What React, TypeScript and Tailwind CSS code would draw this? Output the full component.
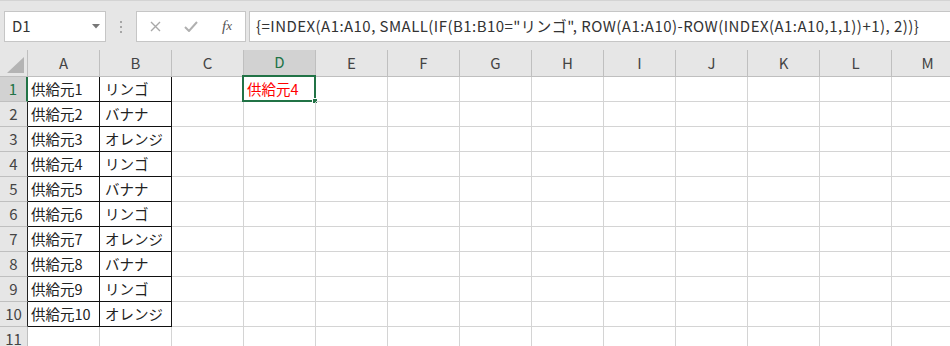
import React from "react";

const COLS = ["A", "B", "C", "D", "E", "F", "G", "H", "I", "J", "K", "L", "M"];
const FRUITS = ["リンゴ", "バナナ", "オレンジ", "リンゴ", "バナナ", "リンゴ", "オレンジ", "バナナ", "リンゴ", "オレンジ"];
const FORMULA = '{=INDEX(A1:A10, SMALL(IF(B1:B10="リンゴ", ROW(A1:A10)-ROW(INDEX(A1:A10,1,1))+1), 2))}';

export default function App() {
  return (
    <div className="h-[346px] w-[950px] overflow-hidden bg-white font-['Noto_Sans_CJK_JP','Noto_Sans',sans-serif] text-[#222]">
      <FormulaBar />
      <Sheet />
    </div>
  );
}

function FormulaBar() {
  return (
    <div className="flex h-[50px] items-start border-t border-[#d4d4d4] bg-[#e6e6e6] pt-[10px]">
      {/* name box */}
      <div className="ml-[4px] flex h-[31px] w-[102px] items-center justify-between border border-[#c6c6c6] bg-white pl-[7px] pr-[5px]">
        <span className="text-[15px] text-[#333]">D1</span>
        <svg width="8" height="5" viewBox="0 0 8 5">
          <polygon points="0,0 8,0 4,4.5" fill="#777" />
        </svg>
      </div>
      <div className="flex h-[31px] w-[30px] flex-col items-center justify-center gap-[3px]">
        <span className="h-[2px] w-[2px] bg-[#a6a6a6]" />
        <span className="h-[2px] w-[2px] bg-[#a6a6a6]" />
        <span className="h-[2px] w-[2px] bg-[#a6a6a6]" />
      </div>
      {/* cancel / enter / fx */}
      <div className="grid h-[31px] w-[110px] grid-cols-[36px_36px_36px] items-center border border-[#c6c6c6] bg-white">
        <div className="flex justify-center">
          <svg width="11" height="11" viewBox="0 0 11 11">
            <path d="M1 1 L10 10 M10 1 L1 10" stroke="#a8a8a8" strokeWidth="1.4" />
          </svg>
        </div>
        <div className="flex justify-center">
          <svg width="14" height="11" viewBox="0 0 14 11">
            <path d="M1 6 L5 10 L13 1" stroke="#b0b0b0" strokeWidth="2" fill="none" />
          </svg>
        </div>
        <div className="flex justify-center font-['Liberation_Serif',serif] text-[15px] italic leading-none text-[#555]">
          f<span className="text-[13px]">x</span>
        </div>
      </div>
      <div className="ml-[3px] flex h-[31px] flex-1 items-center border border-r-0 border-[#c6c6c6] bg-white pl-[6px]">
        <span className="whitespace-nowrap text-[15px] tracking-[0.45px] text-[#333]">{FORMULA}</span>
      </div>
    </div>
  );
}

function Sheet() {
  return (
    <div className="grid grid-cols-[28px_repeat(13,72px)] grid-rows-[27px_repeat(11,25px)]">
      {/* header row */}
      <div className="relative border-r border-b border-[#bfbfbf] bg-[#e6e6e6]">
        <svg width="28" height="27" viewBox="0 0 28 27" className="block">
          <polygon points="24,7 24,23 7,23" fill="#b4b4b4" />
        </svg>
      </div>
      {COLS.map((c) => (
        <div
          key={c}
          className={`flex items-center justify-center border-r border-b text-[15px] ${
            c === "D"
              ? "border-b-2 border-r-[#bfbfbf] border-b-[#217346] bg-[#d2d2d2] text-[#217346]"
              : "border-[#bfbfbf] bg-[#e6e6e6] text-[#444]"
          }`}
        >
          {c}
        </div>
      ))}

      {Array.from({ length: 11 }, (_, i) => {
        const r = i + 1;
        const inTable = r <= 10;
        return (
          <React.Fragment key={r}>
            <div
              className={`flex items-center justify-center border-b border-r text-[15px] ${
                r === 1
                  ? "border-b-[#bfbfbf] border-r-2 border-r-[#217346] bg-[#d2d2d2] text-[#217346]"
                  : inTable
                  ? "border-b-[#bfbfbf] border-r-[#222] bg-[#e6e6e6] text-[#444]"
                  : "border-[#bfbfbf] bg-[#e6e6e6] text-[#444]"
              }`}
            >
              {r}
            </div>
            {COLS.map((c) => {
              let text = "";
              if (inTable && c === "A") text = `供給元${r}`;
              if (inTable && c === "B") text = FRUITS[i];
              const black = inTable && (c === "A" || c === "B");
              const active = r === 1 && c === "D";
              return (
                <div
                  key={c}
                  className={`relative flex items-center border-r border-b pl-[3px] text-[14.5px] whitespace-nowrap ${
                    black ? "border-[#111]" : "border-[#d4d4d4]"
                  }`}
                >
                  {c === "B" && inTable ? <span className="pl-[2px]">{text}</span> : text}
                  {active && (
                    <>
                      <span className="text-[#ff0000]">供給元4</span>
                      <div className="absolute -top-[2px] -left-[2px] -right-[1px] -bottom-[1px] border-2 border-[#217346]" />
                      <div className="absolute -right-[3px] -bottom-[3px] h-[6px] w-[6px] border border-white bg-[#217346]" />
                    </>
                  )}
                </div>
              );
            })}
          </React.Fragment>
        );
      })}
    </div>
  );
}
